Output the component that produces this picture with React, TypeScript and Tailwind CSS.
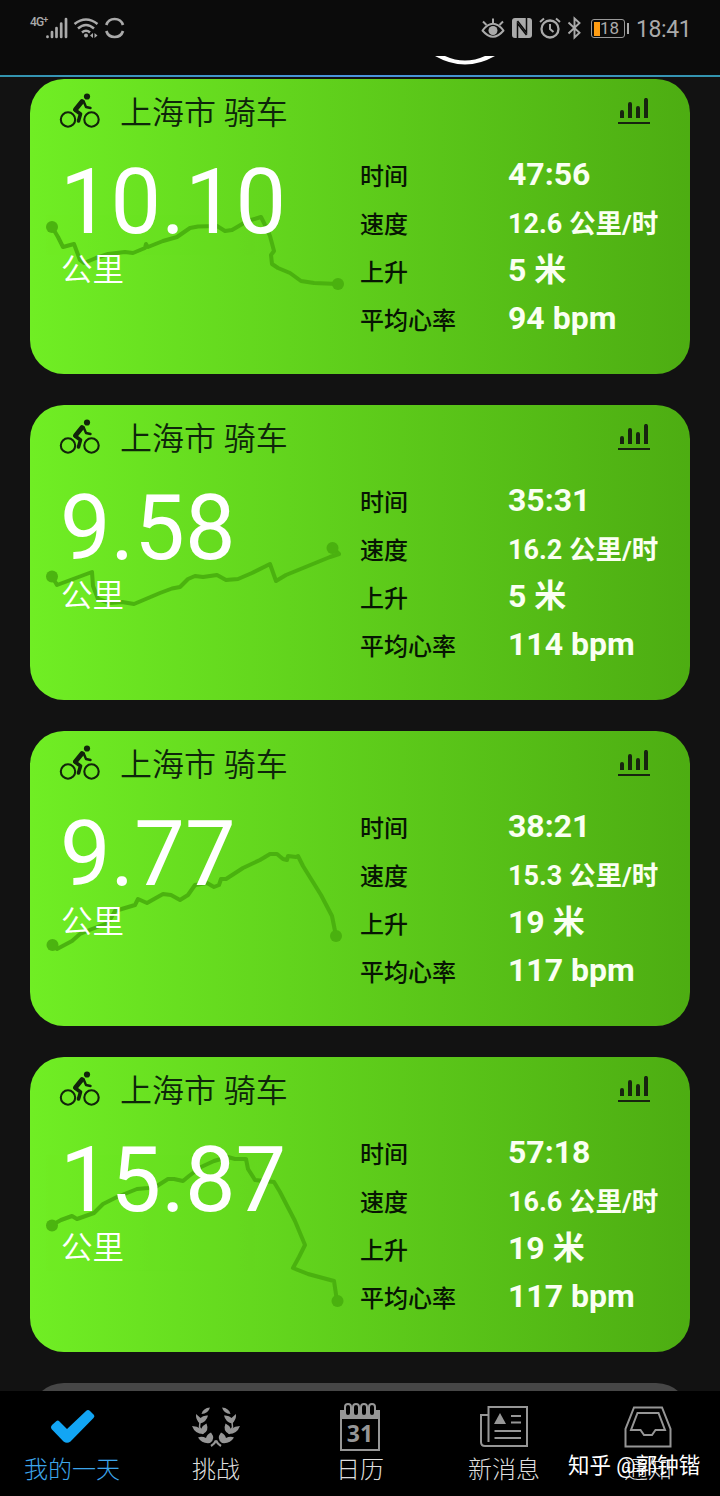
import type { ReactNode } from "react";

const FONT = "font-['Roboto','Noto_Sans_CJK_SC',sans-serif]";

type Ride = {
  distance: string;
  time: string;
  speed: string;
  climb: string;
  heart: string;
  track: string;
  start: [number, number];
  end: [number, number];
};

const rides: Ride[] = [
  {
    distance: "10.10",
    time: "47:56",
    speed: "12.6",
    climb: "5",
    heart: "94 bpm",
    track:
      "M22 147 L28 157 L33 167 L44 164 L50 180 L54 183 L66 178 L78 174 L95 172 L103 173 L115 168 L116 164 L118 167 L133 161 L147 157 L160 148 L168 146.500 L187 146 L195 151 L202 150 L214 143 L221 140 L231 137 L235 145 L240 156 L244 171 L241 175 L242 184 L248 188 L260 193 L271 201 L284 203 L308 204",
    start: [22, 147],
    end: [308, 204],
  },
  {
    distance: "9.58",
    time: "35:31",
    speed: "16.2",
    climb: "5",
    heart: "114 bpm",
    track:
      "M22 170.500 L27 179 L62 166 L63 180 L68 193 L80 197 L92 196 L104 198 L130 187 L142 182.500 L150 181 L158 173 L165 170 L173 171 L187 169 L196 174 L208 173 L222 167 L240 158 L246 175 L256 169 L300 151 L309 148 L303 142",
    start: [22, 170.5],
    end: [302.5, 142],
  },
  {
    distance: "9.77",
    time: "38:21",
    speed: "15.3",
    climb: "19",
    heart: "117 bpm",
    track:
      "M22 213 L27 217 L42 209 L50 202 L62 197 L78 191 L85 179 L105 173 L108 167 L117 171 L133 162 L141 163 L150 168 L158 163 L165 153 L177 151 L184 155 L189 153 L191 147 L196 147 L213 136 L230 128 L240 122 L247 122 L253 127 L257 128 L258 124 L266 125 L268 124 L273 134 L291 163 L302 184 L306 204",
    start: [22.5, 213],
    end: [306, 204],
  },
  {
    distance: "15.87",
    time: "57:18",
    speed: "16.6",
    climb: "19",
    heart: "117 bpm",
    track:
      "M22 167 L31 162 L42 158 L47 161 L64 155 L73 146 L87 139 L97 135 L107 131 L118 130 L127 128 L138 121 L144 121 L153 123 L159 118 L171 109 L184 103 L198 99 L205 101 L216 101 L218 111 L225 122 L244 124 L250 134 L265 163 L275 187 L269 199 L263 210 L278 216 L304 223 L307 243",
    start: [22, 167.5],
    end: [307.5, 243],
  },
];

function Bike() {
  return (
    <svg width="44" height="38" viewBox="0 0 44 38" fill="none" stroke="#12240b" strokeLinejoin="round">
      <circle cx="10" cy="27.500" r="7.200" strokeWidth="2.100" />
      <circle cx="33.500" cy="27.500" r="7.200" strokeWidth="2.100" />
      <circle cx="29" cy="4.500" r="3.100" fill="#12240b" stroke="none" />
      <path d="M24 9.500 L17.500 17.500" strokeWidth="4.800" strokeLinecap="round" />
      <path d="M25.500 9 L28 15 L32.500 16" strokeWidth="2.400" strokeLinecap="round" />
      <path d="M17 18 L22.500 22 L20.500 29" strokeWidth="3.600" strokeLinecap="round" />
    </svg>
  );
}

function Bars() {
  return (
    <svg width="32" height="26" viewBox="0 0 32 26" stroke="#17240f" strokeWidth="4" fill="none">
      <path d="M4 20 V14 M12 20 V6 M20 20 V10 M28 20 V2" strokeLinecap="butt" />
      <path d="M4 14 v-.1 M12 6 v-.1 M20 10 v-.1 M28 2 v-.1" strokeLinecap="round" />
      <path d="M0 25 H32" strokeWidth="2" />
    </svg>
  );
}

function Stat({ label, children }: { label: string; children: ReactNode }) {
  return (
    <div className="flex h-12 whitespace-nowrap">
      <span className="w-[148px] pt-[13px] text-[24px] leading-[24px] font-medium text-[#071503]">{label}</span>
      <span className="pt-[6px] text-[32px] leading-[32px] font-bold text-[#fafff2]">{children}</span>
    </div>
  );
}

function RideCard({ ride }: { ride: Ride }) {
  return (
    <section className="relative h-[295px] shrink-0 overflow-hidden rounded-[34px] bg-linear-to-r from-[#70ee24] to-[#4dad12]">
      <svg className="absolute inset-x-0 top-px" width="660" height="294" viewBox="0 0 660 294">
        <g opacity="0.9">
          <path d={ride.track} fill="none" stroke="#48ae0e" strokeWidth="4" strokeLinejoin="round" />
          <circle cx={ride.start[0]} cy={ride.start[1]} r="6" fill="#48ae0e" />
          <circle cx={ride.end[0]} cy={ride.end[1]} r="6" fill="#48ae0e" />
        </g>
      </svg>

      <div className="relative flex h-[72px] items-start pl-7">
        <div className="pt-[13px]">
          <Bike />
        </div>
        <h2 className="ml-[18px] pt-[18px] text-[32px] leading-[32px] font-[350] text-[#0e260a]">上海市 骑车</h2>
        <div className="mr-10 ml-auto pt-[19px]">
          <Bars />
        </div>
      </div>

      <div className="relative flex">
        <div className="w-[330px] pt-[7px] pl-[30px] text-white">
          <p className="text-[90px] leading-[90px]">{ride.distance}</p>
          <p className="pt-[7px] pl-px text-[31.500px] leading-[32px] font-[350]">公里</p>
        </div>
        <div className="pt-px">
          <Stat label="时间">{ride.time}</Stat>
          <Stat label="速度">
            <span className="text-[27px]">
              {ride.speed} <span className="text-[26.500px]">公里/时</span>
            </span>
          </Stat>
          <Stat label="上升">{ride.climb} 米</Stat>
          <Stat label="平均心率">{ride.heart}</Stat>
        </div>
      </div>
    </section>
  );
}

function StatusBar() {
  return (
    <header className="flex h-14 shrink-0 items-start bg-[#0b0b0b] pt-4 pr-[29px] pl-[30px] text-[#aaa]">
      <span className="flex w-[16px] text-[12px] leading-[13px] font-medium tracking-[-0.9px] whitespace-nowrap">
        4G<span className="-mt-[2px] text-[9px]">+</span>
      </span>
      <svg width="22" height="24" viewBox="0 0 22 24" stroke="currentColor" strokeWidth="2.700" strokeLinecap="round">
        <path d="M1.500 21 V20.500 M6 21 V16 M10.500 21 V12 M15.200 21 V7.500 M20 21 V3" />
      </svg>
      <svg className="ml-[5px]" width="26" height="24" viewBox="0 0 26 24" fill="none" stroke="currentColor" strokeWidth="2.500">
        <path d="M1.500 8 Q13 -1 24.500 8" />
        <path d="M5 12.500 Q13 5.500 21 12.500" />
        <path d="M9 16.500 Q13 13 17 16.500" />
        <circle cx="13" cy="19.500" r="2" fill="currentColor" stroke="none" />
        <path d="M20 17 L17 19.500 L20 22 Z M21.500 17 L24.500 19.500 L21.500 22 Z" fill="currentColor" stroke="none" />
      </svg>
      <svg className="ml-[6px]" width="20" height="24" viewBox="0 0 20 24" fill="none" stroke="currentColor" strokeWidth="2.700">
        <path d="M1.300 9 A8.800 8.800 0 0 1 18 9 M18 15 A8.800 8.800 0 0 1 1.300 15" />
      </svg>

      <div className="ml-auto flex items-start">
        <svg width="24" height="24" viewBox="0 0 24 24" fill="none" stroke="currentColor" strokeWidth="2">
          <path d="M1.500 14.500 Q12 1 22.500 14.500 Q12 27 1.500 14.500 Z" strokeLinejoin="round" />
          <circle cx="12" cy="14.500" r="4.500" fill="currentColor" stroke="none" />
          <path d="M12 7 V2.500 M5.500 9 L2 5.500 M18.500 9 L22 5.500" />
        </svg>
        <svg className="ml-[6px]" width="22" height="24" viewBox="0 0 22 24">
          <rect x="1" y="2" width="20" height="20" rx="3" fill="currentColor" />
          <path d="M6.500 23 V7.500 L15.500 19" fill="none" stroke="#0b0b0b" strokeWidth="1.500" />
          <path d="M15.500 1 V16.500 L6.500 5" fill="none" stroke="#0b0b0b" strokeWidth="1.500" />
        </svg>
        <svg className="ml-[6px]" width="22" height="24" viewBox="0 0 22 24" fill="none" stroke="currentColor" strokeWidth="2">
          <circle cx="11" cy="13" r="8.500" strokeWidth="2.300" />
          <path d="M11 8 V13 L14.500 16 M1 6 L5 2.500 M21 6 L17 2.500" />
        </svg>
        <svg className="ml-[6px]" width="15" height="24" viewBox="0 0 15 24" fill="none" stroke="currentColor" strokeWidth="1.900">
          <path d="M1.500 6.500 L12.500 16.800 L7.500 21.500 V2.500 L12.500 7 L1.500 17.500" />
        </svg>
        <div className="mt-[3px] ml-[9px] flex h-[19px] w-[34px] items-center rounded-[3px] border border-[#999] pl-[2px]">
          <span className="h-[14px] w-[6px] bg-[#ff9c12]" />
          <span className="text-[17px] leading-[17px]">18</span>
        </div>
        <span className="mt-[7px] ml-[2px] h-[11px] w-[2px] bg-[#aaa]" />
        <span className="ml-[7px] w-[55px] text-[23px] leading-[27px] tracking-[-0.4px] whitespace-nowrap">18:41</span>
      </div>
    </header>
  );
}

function Tab({ label, active, children }: { label: string; active?: boolean; children: ReactNode }) {
  return (
    <div className="flex w-36 flex-col items-center">
      <div className="flex h-[67px] items-center pt-[5px] text-[#969696]">{children}</div>
      <span
        className={
          active
            ? "text-[24px] leading-[24px] font-light text-[#3da5ea]"
            : "text-[24px] leading-[24px] font-light text-[#dedede]"
        }
      >
        {label}
      </span>
    </div>
  );
}

// one side of the laurel wreath, mirrored for the other
function Branch() {
  return (
    <g fill="currentColor">
      <path d="M8 16 L7.500 21 L11 28" fill="none" stroke="currentColor" strokeWidth="1.500" />
      <path d="M18 1.500 Q11 2 9.500 8 Q16 8 18 1.500 Z" />
      <path d="M4 8 L8.500 12 Q11 9 16 9.500 Q14.500 16 8 17.500 Q3.500 14 4 8 Z" />
      <path d="M0 20 Q5 20 9 23 Q11 19 14.500 17.500 Q17.500 25 11 28 Q3 28 0 20 Z" />
      <path d="M6 31.500 Q10 30 14 32 Q15 28 19 26.500 Q24 33 18 37 Q10 38 6 31.500 Z" />
      <path d="M24 34.500 Q22.500 38 19 40" fill="none" stroke="currentColor" strokeWidth="2.200" />
    </g>
  );
}

function TabBar() {
  return (
    <nav className="relative flex h-[105px] shrink-0 bg-black">
      <Tab label="我的一天" active>
        <svg className="ml-[2px]" width="46" height="36" viewBox="0 0 46 36">
          <path
            d="M2 16 L6.500 12 Q8 11 9.500 12.500 L17 20 L36 2 Q38 0 40 2 L44 6 Q45 7.500 43.500 9 L20.500 32.500 Q17 35 13.500 32.500 L1.500 20 Q0 18 2 16 Z"
            fill="#12a5f4"
          />
        </svg>
      </Tab>
      <Tab label="挑战">
        <svg width="48" height="42" viewBox="0 0 48 42">
          <Branch />
          <g transform="translate(48 0) scale(-1 1)">
            <Branch />
          </g>
        </svg>
      </Tab>
      <Tab label="日历">
        <svg width="42" height="50" viewBox="0 0 42 50" fill="none" stroke="currentColor" strokeWidth="2">
          <path d="M2 9 H40 V48 H2 Z" />
          <path d="M1 8 H41 V17 H1 Z" fill="currentColor" stroke="none" />
          {[9, 17, 25, 33].map((x) => (
            <rect key={x} x={x - 3} y="2" width="6" height="12" rx="3" fill="#000" />
          ))}
          <text
            x="21"
            y="40"
            textAnchor="middle"
            fill="currentColor"
            stroke="none"
            className="font-['Open_Sans',sans-serif] text-[23px] font-bold"
          >
            31
          </text>
        </svg>
      </Tab>
      <Tab label="新消息">
        <svg width="48" height="42" viewBox="0 0 48 42" fill="none" stroke="currentColor" strokeWidth="2">
          <path d="M8.500 36 V1 H47 V40 H5 Q1 40 1 36 V9 H8.500" />
          <path d="M20 7 L26 18 H14 Z" fill="currentColor" stroke="none" />
          <path d="M31 10 H41 M31 16.500 H41 M14.500 25 H41 M14.500 32 H41" />
        </svg>
      </Tab>
      <Tab label="通知">
        <svg width="48" height="42" viewBox="0 0 48 42" fill="none" stroke="currentColor" strokeWidth="2">
          <path d="M10 1.500 H38 L46.500 23 V40.500 H1.500 V23 Z" />
          <path d="M13.500 7 H34.500 L41 24 H31.500 L28 29 H20 L16.500 24 H7 Z" />
        </svg>
      </Tab>
      <span className="absolute top-[63px] left-[568px] text-[21.500px] leading-[24px] whitespace-nowrap text-white">
        知乎 @郭钟锴
      </span>
    </nav>
  );
}

export default function App() {
  return (
    <div className={`${FONT} flex h-[1496px] w-[720px] flex-col overflow-hidden bg-[#121212]`}>
      <StatusBar />
      <div className="h-[19px] shrink-0 bg-[#0b0b0b] pl-[435px]">
        <svg width="60" height="10" viewBox="0 0 60 10">
          <path d="M0 0 H10 Q30 9 50 0 H60 Q30 17 0 0 Z" fill="#fff" />
        </svg>
      </div>
      <div className="h-[2px] shrink-0 bg-linear-to-r from-[#3294ad] via-[#4b93df] to-[#3294ad]" />
      <main className="flex h-[1314px] shrink-0 flex-col gap-[31px] overflow-hidden px-[30px] pt-[2px]">
        {rides.map((ride) => (
          <RideCard key={ride.distance} ride={ride} />
        ))}
        <section className="h-[295px] shrink-0 rounded-[34px] bg-[#464646]" />
      </main>
      <TabBar />
    </div>
  );
}
